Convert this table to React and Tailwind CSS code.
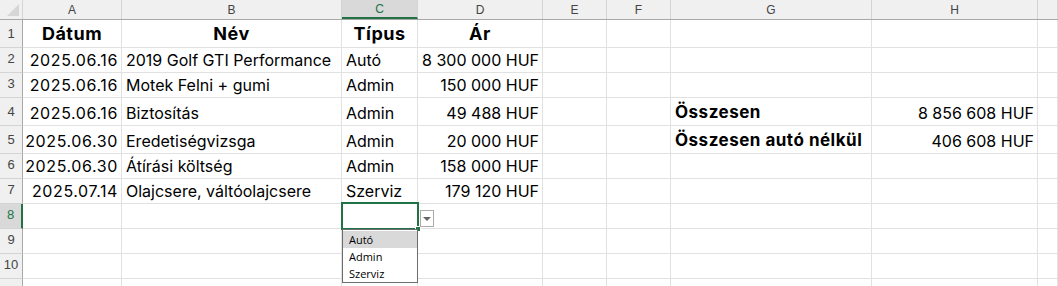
const font = "font-['Inter','Roboto',sans-serif]";

const cols = [
  { key: 'A', w: 'w-[99px]' },
  { key: 'B', w: 'w-[220px]' },
  { key: 'C', w: 'w-[76px]' },
  { key: 'D', w: 'w-[125px]' },
  { key: 'E', w: 'w-[64px]' },
  { key: 'F', w: 'w-[64px]' },
  { key: 'G', w: 'w-[201px]' },
  { key: 'H', w: 'w-[166px]' },
  { key: '', w: 'flex-1' },
];

const rows = [
  { n: 1, h: 'h-[28px]', cells: { A: ['Dátum', 'head'], B: ['Név', 'head'], C: ['Típus', 'head'], D: ['Ár', 'head'] } },
  { n: 2, h: 'h-[25px]', cells: { A: ['2025.06.16', 'date'], B: ['2019 Golf GTI Performance'], C: ['Autó'], D: ['8 300 000 HUF', 'r'] } },
  { n: 3, h: 'h-[25px]', cells: { A: ['2025.06.16', 'date'], B: ['Motek Felni + gumi'], C: ['Admin'], D: ['150 000 HUF', 'r'] } },
  { n: 4, h: 'h-[28px]', cells: { A: ['2025.06.16', 'date'], B: ['Biztosítás'], C: ['Admin'], D: ['49 488 HUF', 'r'], G: ['Összesen', 'bold'], H: ['8 856 608 HUF', 'r'] } },
  { n: 5, h: 'h-[28px]', cells: { A: ['2025.06.30', 'date'], B: ['Eredetiségvizsga'], C: ['Admin'], D: ['20 000 HUF', 'r'], G: ['Összesen autó nélkül', 'bold'], H: ['406 608 HUF', 'r'] } },
  { n: 6, h: 'h-[25px]', cells: { A: ['2025.06.30', 'date'], B: ['Átírási költség'], C: ['Admin'], D: ['158 000 HUF', 'r'] } },
  { n: 7, h: 'h-[25px]', cells: { A: ['2025.07.14', 'date'], B: ['Olajcsere, váltóolajcsere'], C: ['Szerviz'], D: ['179 120 HUF', 'r'] } },
  { n: 8, h: 'h-[25px]', cells: {} },
  { n: 9, h: 'h-[25px]', cells: {} },
  { n: 10, h: 'h-[25px]', cells: {} },
  { n: 11, h: 'h-[25px]', cells: {}, hideLabel: true },
];

function Cell({ col, value }) {
  const [text, kind] = value || [];
  let align = 'justify-start pl-[4px]';
  let weight = 'font-normal text-[16px]';
  if (kind === 'head') {
    align = 'justify-center';
    weight = 'font-bold text-[18px] tracking-[0.5px]';
  } else if (kind === 'date') {
    align = 'justify-end pr-[3px]';
    weight = 'font-normal text-[16px] tracking-[0.6px]';
  } else if (kind === 'r') {
    align = 'justify-end pr-[3px]';
  } else if (kind === 'bold') {
    weight = 'font-bold text-[17px] tracking-[0.5px]';
  }
  return (
    <div className={`${col.w} shrink-0 h-full flex items-end pb-[2px] border-r border-b border-[#e1e1e1] overflow-visible whitespace-nowrap text-black leading-none ${align} ${weight}`}>
      {text && <span className="pb-[2px]">{text}</span>}
    </div>
  );
}

export default function App() {
  return (
    <div className={`relative w-[1058px] h-[286px] overflow-hidden bg-white ${font}`}>
      {/* column headers */}
      <div className="flex h-[20px] bg-[#f0f0f0] border-b border-[#a8a8a8]">
        <div className="w-[23px] shrink-0 h-full border-r border-[#d4d4d4] relative">
          <div className="absolute right-[3px] bottom-[3px] w-0 h-0 border-l-[12px] border-l-transparent border-b-[12px] border-b-[#d6d6d6]" />
        </div>
        {cols.map((c, i) => (
          <div
            key={i}
            className={`${c.w} shrink-0 h-full flex items-center justify-center text-[12px] border-r border-[#d4d4d4] ${
              c.key === 'C' ? 'bg-[#d9d9d9] text-[#217346] border-b-2 border-b-[#217346]' : 'text-[#444]'
            } font-['Liberation_Sans',sans-serif]`}
          >
            {c.key}
          </div>
        ))}
      </div>

      {rows.map((r) => (
        <div key={r.n} className={`flex ${r.h}`}>
          <div
            className={`w-[23px] shrink-0 h-full flex items-end justify-center pb-[4px] text-[13px] border-b border-[#d4d4d4] font-['Liberation_Sans',sans-serif] ${
              r.n === 8
                ? 'bg-[#d9d9d9] text-[#217346] border-r-2 border-r-[#217346]'
                : 'bg-[#f0f0f0] text-[#444] border-r border-r-[#a8a8a8]'
            }`}
          >
            {r.hideLabel ? '' : r.n}
          </div>
          {cols.map((c, i) => (
            <Cell key={i} col={c} value={r.cells[c.key]} />
          ))}
        </div>
      ))}

      {/* active cell C8 */}
      <div className="absolute left-[341px] top-[202px] w-[78px] h-[28px] border-2 border-[#217346]" />
      <div className="absolute left-[415px] top-[226px] w-[6px] h-[6px] bg-[#217346] border border-white" />

      {/* dropdown button */}
      <div className="absolute left-[420px] top-[210px] w-[14px] h-[17px] bg-white border border-[#ababab] flex items-center justify-center">
        <div className="w-0 h-0 border-l-[4px] border-r-[4px] border-t-[4px] border-l-transparent border-r-transparent border-t-[#666]" />
      </div>

      {/* dropdown list */}
      <div className="absolute left-[342px] top-[229px] w-[76px] h-[54px] bg-white border border-[#6d6d6d] pt-[1px] font-['Open_Sans',sans-serif] text-[11px] text-black leading-none">
        <div className="h-[17px] bg-[#d9d9d9] flex items-center pl-[6px]">Autó</div>
        <div className="h-[17px] flex items-center pl-[6px]">Admin</div>
        <div className="h-[17px] flex items-center pl-[6px]">Szerviz</div>
      </div>
    </div>
  );
}
